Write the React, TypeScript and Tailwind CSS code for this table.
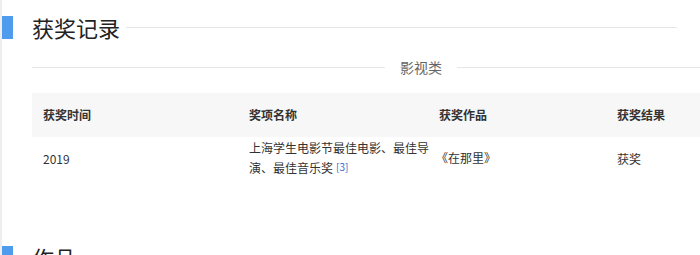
import React from "react";

const font = { fontFamily: '"Noto Sans CJK SC", "Noto Sans", sans-serif' };

function SectionTitle({ title, line = true }: { title: string; line?: boolean }) {
  return (
    <div className="flex items-center h-[23px]">
      <div className="w-[11px] h-[23px] bg-[#4f9cee] shrink-0" />
      <div className="ml-[19px] text-[22px] leading-[23px] text-[#222]">{title}</div>
      {line && <div className="flex-1 h-px bg-[#e6e6e6] ml-[6px] mr-[23px]" />}
    </div>
  );
}

export default function App() {
  return (
    <div
      className="w-[700px] h-[255px] overflow-hidden bg-white border-l-2 border-[#eeeeee]"
      style={font}
    >
      <div className="pt-[16px]">
        <SectionTitle title="获奖记录" />
      </div>
      <div className="pl-[30px] mt-[27px] flex items-center h-[2px]">
        <div className="w-[353px] h-px bg-[#e6e6e6]" />
        <div className="px-[15px] text-[14px] leading-[20px] text-[#666]">影视类</div>
        <div className="flex-1 h-px bg-[#e6e6e6]" />
      </div>
      <div className="pl-[30px] mt-[25px]">
        <table className="w-[668px] border-collapse text-[12px] text-[#333] table-fixed">
          <colgroup>
            <col className="w-[206px]" />
            <col className="w-[190px]" />
            <col className="w-[178px]" />
            <col />
          </colgroup>
          <thead>
            <tr className="bg-[#f7f7f7] h-[44px]">
              <th className="text-left font-bold pl-[11px]">获奖时间</th>
              <th className="text-left font-bold pl-[11px]">奖项名称</th>
              <th className="text-left font-bold pl-[11px]">获奖作品</th>
              <th className="text-left font-bold pl-[11px]">获奖结果</th>
            </tr>
          </thead>
          <tbody>
            <tr>
              <td className="pl-[11px] align-middle pt-[3px]">2019</td>
              <td className="pl-[11px] pr-0 pt-[1px] leading-[20px]">
                <div className="w-[182px]">
                  上海学生电影节最佳电影、最佳导演、最佳音乐奖
                  <sup className="text-[10px] text-[#3366cc] ml-[3px] relative top-[-2px]">[3]</sup>
                </div>
              </td>
              <td className="pl-[8px] align-middle pt-[1px]">《在那里》</td>
              <td className="pl-[11px] align-middle pt-[3px]">获奖</td>
            </tr>
          </tbody>
        </table>
      </div>
      <div className="mt-[68px]">
        <SectionTitle title="作品" line={false} />
      </div>
    </div>
  );
}
